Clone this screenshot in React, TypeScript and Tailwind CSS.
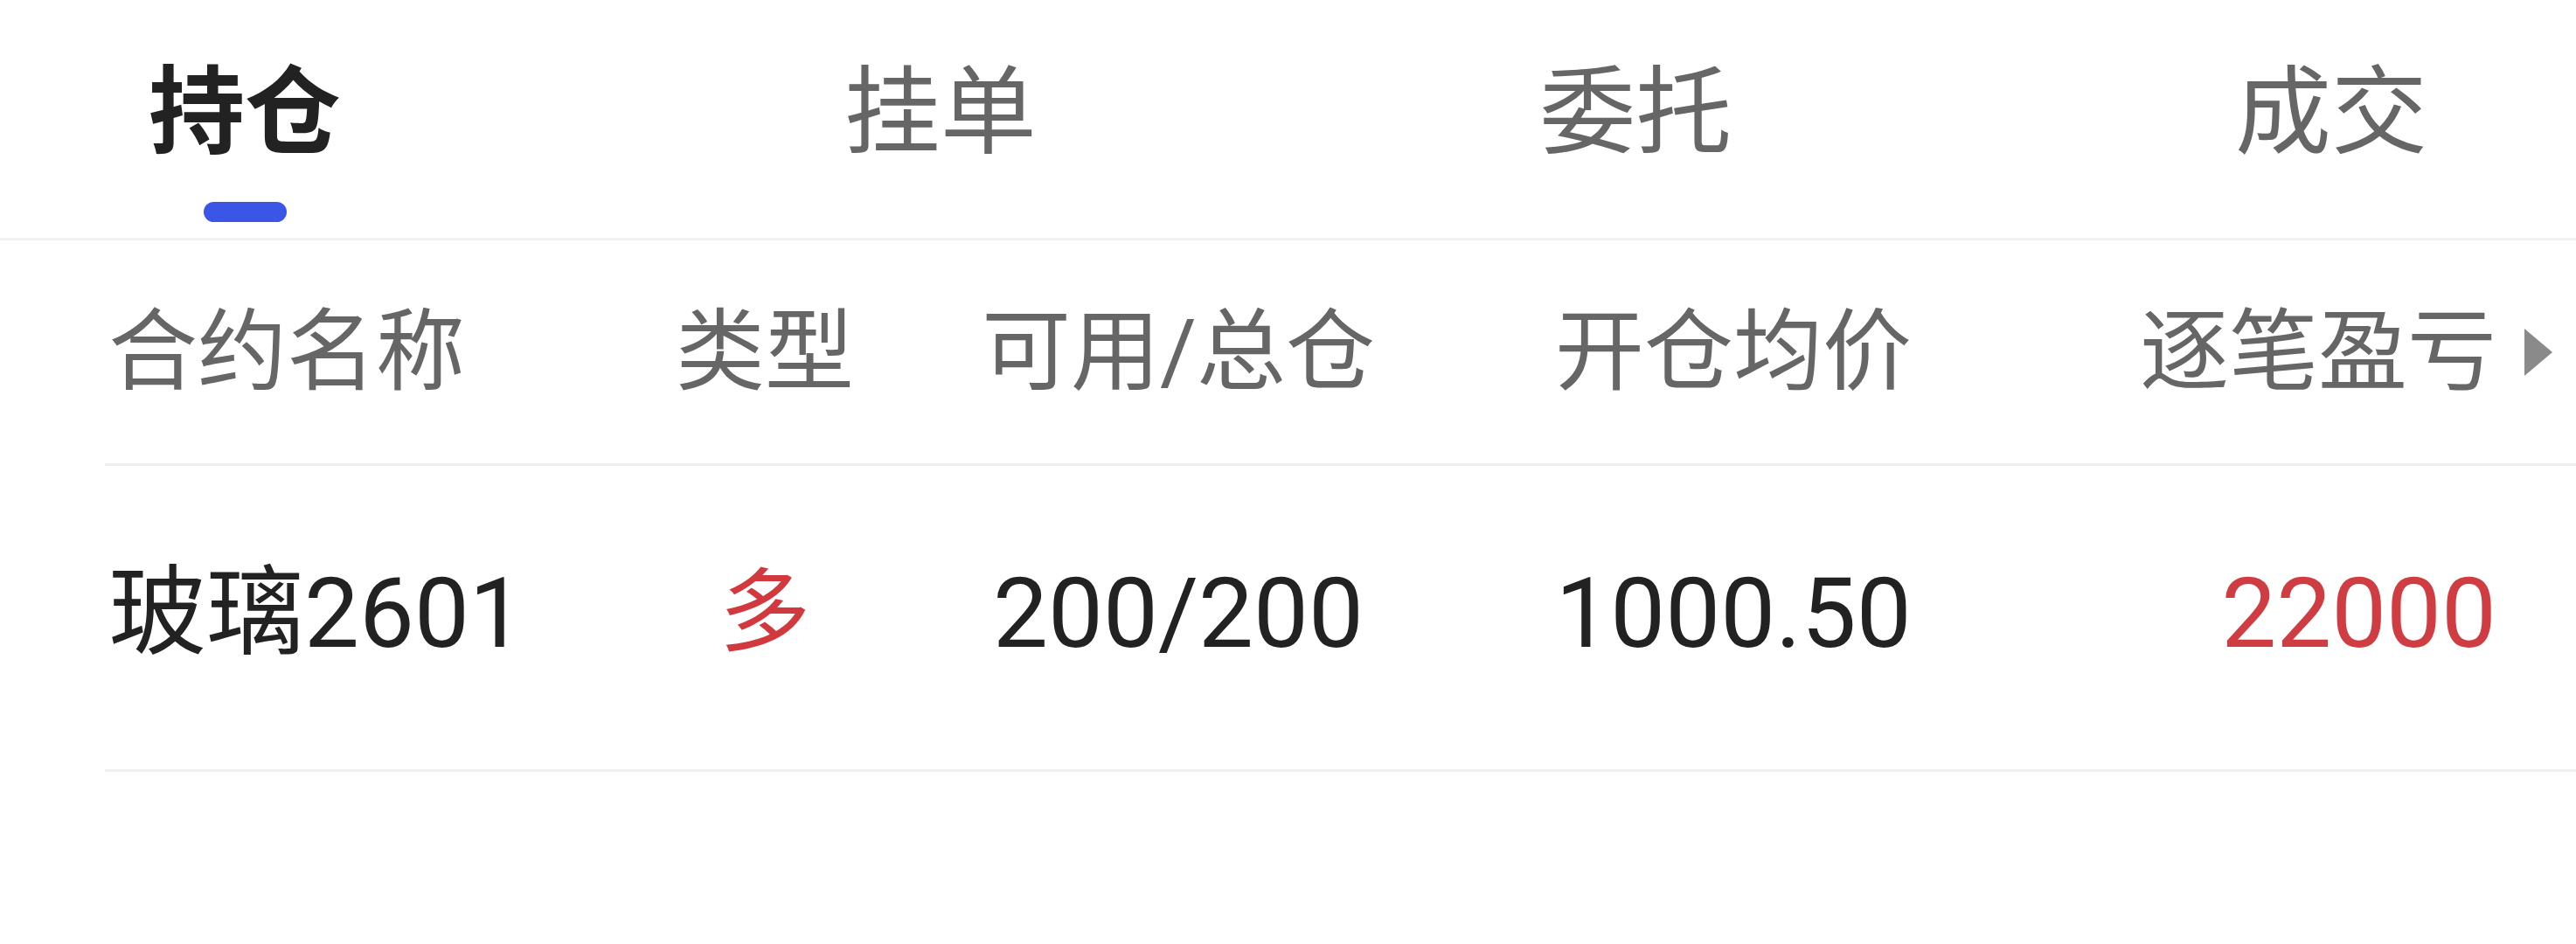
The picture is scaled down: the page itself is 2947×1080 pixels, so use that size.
import React, { useState } from "react";

const tabs = ["持仓", "挂单", "委托", "成交"];

const App = () => {
  const [active, setActive] = useState(0);

  return (
    <div
      className="w-[2947px] h-[1080px] bg-white overflow-hidden"
      style={{ fontFamily: "Roboto, 'Noto Sans CJK SC', sans-serif" }}
    >
      {/* TABS */}
      <div className="h-[275px] border-b-[3px] border-[#f2f2f2] flex justify-between px-[170px]">
        {tabs.map((t, i) => (
          <button
            key={t}
            onClick={() => setActive(i)}
            className="flex flex-col items-center pt-[75px]"
          >
            <span
              className={
                i === active
                  ? "text-[110px] leading-none font-semibold text-[#222222]"
                  : "text-[110px] leading-none text-[#666666]"
              }
            >
              {t}
            </span>
            {i === active && (
              <span className="mt-[46px] w-[95px] h-[23px] rounded-full bg-[#3b55e6]" />
            )}
          </button>
        ))}
      </div>

      {/* TABLE */}
      <div className="ml-[120px]">
        <div className="h-[258px] border-b-[3px] border-[#f0f0f0] flex items-center text-[102px] leading-none text-[#666666]">
          <div className="w-[580px] pl-[4px]">合约名称</div>
          <div className="w-[350px] text-center">类型</div>
          <div className="w-[596px] text-center">可用/总仓</div>
          <div className="w-[674px] text-center">开仓均价</div>
          <div className="w-[536px] text-right">逐笔盈亏</div>
          <div className="pl-[32px]">
            <svg width="32" height="54" viewBox="0 0 32 54">
              <polygon points="0,0 32,27 0,54" fill="#8a8a8a" />
            </svg>
          </div>
        </div>

        <div className="h-[350px] pb-[10px] border-b-[3px] border-[#f0f0f0] flex items-center text-[112px] leading-none text-[#222222]">
          <div className="w-[580px] pl-[4px]">玻璃2601</div>
          <div className="w-[350px] text-center text-[#d2393e] text-[104px]">多</div>
          <div className="w-[596px] text-center">200/200</div>
          <div className="w-[674px] text-center">1000.50</div>
          <div className="w-[536px] text-right text-[#cf3d43]">22000</div>
        </div>
      </div>
    </div>
  );
};

export default App;
